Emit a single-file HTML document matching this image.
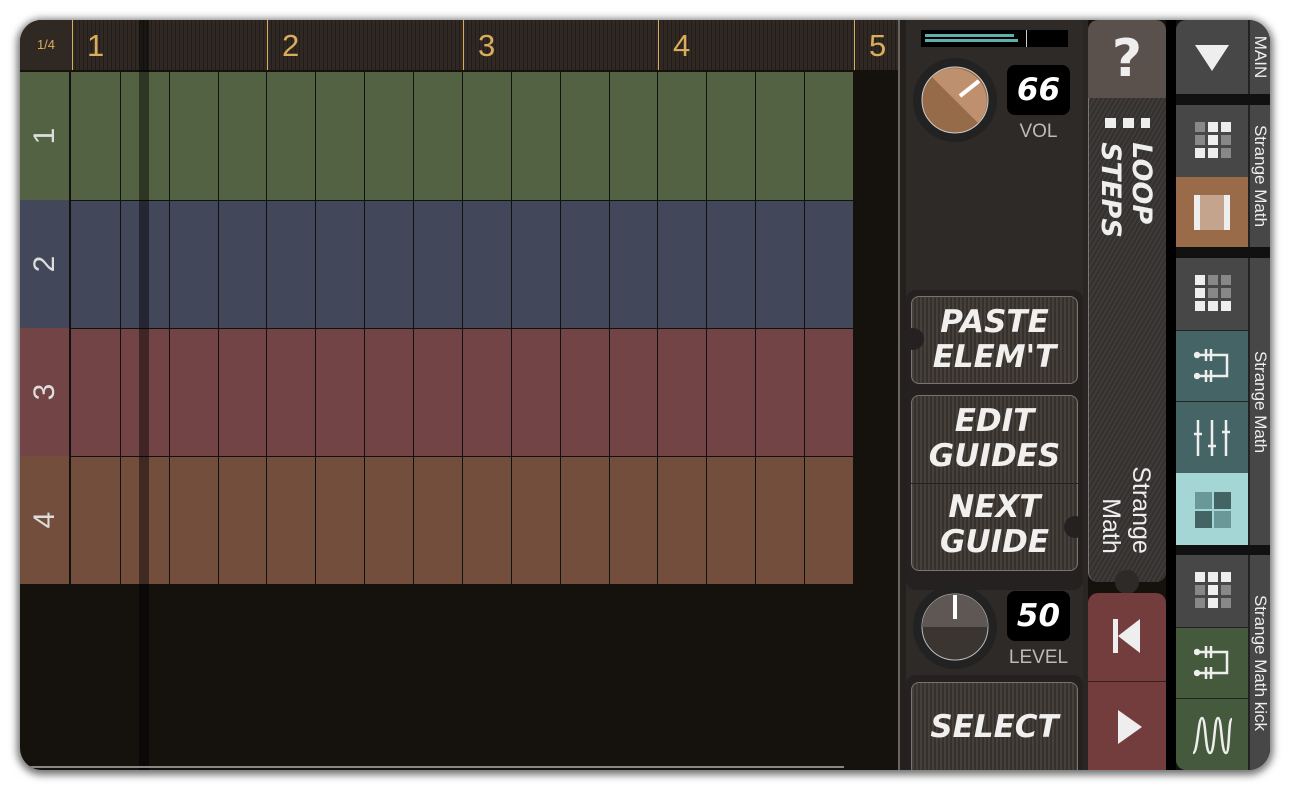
<!DOCTYPE html>
<html><head><meta charset="utf-8"><style>
*{margin:0;padding:0;box-sizing:border-box}
body{width:1290px;height:790px;background:#fff;position:relative;overflow:hidden;font-family:"Liberation Sans","DejaVu Sans",sans-serif}
.a{position:absolute}
#frame{left:20px;top:20px;width:1250px;height:750px;border-radius:22px;overflow:hidden;background:#15110d;box-shadow:0 2px 8px 3px rgba(0,0,0,.55)}
.hdr{background:#2f2823 repeating-linear-gradient(90deg,#2f2823 0 3px,#231d19 3px 4px)}
.bn{color:#d9ad5c;font-size:31px;top:8px}
.gl{width:1px;background:#d9ad5c;top:0;height:50px}
.row{left:0;width:833px;height:128px}
.lbl{left:0;width:51px;height:128px;border-right:2px solid #111}
.lbl span{position:absolute;left:50%;top:50%;transform:translate(-50%,-50%) rotate(-90deg);color:#ddd;font-size:30px}
.vl{width:1px;background:#111;top:52px;height:512px}
.btn{background:#3f3935 repeating-linear-gradient(90deg,#46403b 0 2px,#37312d 2px 4px);border:1px solid #7b746e;border-radius:8px;color:#f2f0ee;font-weight:bold;font-style:italic;font-size:31px;text-align:center;line-height:35px;font-family:"DejaVu Sans","Liberation Sans",sans-serif}
.disp{background:#000;border-radius:8px;color:#fff;font-weight:bold;font-style:italic;font-size:31px;text-align:center;font-family:"DejaVu Sans",sans-serif}
.cap{color:#bbb;font-size:19px;text-align:center}
.tile{left:1156px;width:72px}
.vt{position:absolute;left:50%;top:50%;transform:translate(-50%,-50%) rotate(90deg);white-space:nowrap;color:#eee;font-size:17px}
.gd{display:grid;grid-template-columns:repeat(3,10px);gap:3px;position:absolute;left:19px;top:17px}
.gd i{width:10px;height:10px;background:#eee}
.gd i.d{background:#888}
</style></head><body>
<div id="frame" class="a">
 <div class="a hdr" style="left:0;top:0;width:878px;height:50px"></div>
 <div class="a" style="left:0;top:0;width:52px;height:50px;background:#302823;color:#d9ad5c;font-size:13px;line-height:50px;text-align:center">1/4</div>
 <div class="a gl" style="left:52px"></div><div class="a bn" style="left:67px">1</div>
 <div class="a gl" style="left:247px"></div><div class="a bn" style="left:262px">2</div>
 <div class="a gl" style="left:443px"></div><div class="a bn" style="left:458px">3</div>
 <div class="a gl" style="left:638px"></div><div class="a bn" style="left:653px">4</div>
 <div class="a gl" style="left:834px"></div><div class="a bn" style="left:849px">5</div>
 <div class="a" style="left:878px;top:0;width:2px;height:750px;background:#6a6460"></div>
 <div class="a" style="left:0;top:50px;width:878px;height:2px;background:#15110d"></div>
 <div class="a row" style="top:52px;background:#546244"></div>
 <div class="a row" style="top:180px;background:#424859;border-top:1px solid #111"></div>
 <div class="a row" style="top:308px;background:#734446;border-top:1px solid #111"></div>
 <div class="a row" style="top:436px;background:#744e3c;border-top:1px solid #111"></div>
 <div class="a lbl" style="top:52px;background:#546244"><span>1</span></div>
 <div class="a lbl" style="top:180px;background:#424859"><span>2</span></div>
 <div class="a lbl" style="top:308px;background:#734446"><span>3</span></div>
 <div class="a lbl" style="top:436px;background:#744e3c"><span>4</span></div>
 <div class="a vl" style="left:100px"></div><div class="a vl" style="left:149px"></div><div class="a vl" style="left:198px"></div><div class="a vl" style="left:246px"></div><div class="a vl" style="left:295px"></div><div class="a vl" style="left:344px"></div><div class="a vl" style="left:393px"></div><div class="a vl" style="left:442px"></div><div class="a vl" style="left:491px"></div><div class="a vl" style="left:540px"></div><div class="a vl" style="left:589px"></div><div class="a vl" style="left:637px"></div><div class="a vl" style="left:686px"></div><div class="a vl" style="left:735px"></div><div class="a vl" style="left:784px"></div>
 <div class="a" style="left:119px;top:0;width:10px;height:750px;background:rgba(0,0,0,.45)"></div>
 <div class="a" style="left:10px;top:746px;width:814px;height:2px;background:#8a8680"></div>
 <div class="a" style="left:880px;top:0;width:183px;height:750px;background:#2e2a27"></div>
 <div class="a" style="left:880px;top:0;width:6px;height:750px;background:#24201d"></div>
 <div class="a" style="left:901px;top:10px;width:147px;height:17px;background:#000"></div>
 <div class="a" style="left:905px;top:14px;width:89px;height:3px;background:#5fb0ad"></div>
 <div class="a" style="left:905px;top:19px;width:93px;height:3px;background:#5fb0ad"></div>
 <div class="a" style="left:1006px;top:10px;width:1px;height:17px;background:#ccc"></div>
 <svg class="a" style="left:893px;top:38px" width="84" height="84"><circle cx="42" cy="42" r="42" fill="#222"/><circle cx="42" cy="42" r="33" fill="#966b4a" stroke="#ccc" stroke-width="1"/><path d="M18.7 18.7 A33 33 0 0 1 65.3 65.3 Z" fill="#bf906e"/><line x1="47" y1="38" x2="66" y2="23" stroke="#fff" stroke-width="4"/></svg>
 <div class="a disp" style="left:987px;top:45px;width:63px;height:50px;line-height:50px">66</div>
 <div class="a cap" style="left:987px;top:101px;width:63px">VOL</div>
 <div class="a" style="left:886px;top:270px;width:177px;height:300px;background:#242120;border-radius:10px"></div>
 <div class="a btn" style="left:891px;top:276px;width:167px;height:88px;padding-top:8px">PASTE<br>ELEM'T</div>
 <div class="a" style="left:882px;top:308px;width:22px;height:22px;border-radius:50%;background:#242120"></div>
 <div class="a btn" style="left:891px;top:375px;width:167px;height:176px;padding-top:8px">EDIT<br>GUIDES<div style="margin-top:16px">NEXT<br>GUIDE</div></div>
 <div class="a" style="left:891px;top:463px;width:167px;height:1px;background:#222"></div>
 <div class="a" style="left:1044px;top:496px;width:22px;height:22px;border-radius:50%;background:#242120"></div>
 <svg class="a" style="left:893px;top:565px" width="84" height="84"><circle cx="42" cy="42" r="42" fill="#222"/><circle cx="42" cy="42" r="33" fill="#3a3531" stroke="#bbb" stroke-width="1"/><path d="M9 42 A33 33 0 0 1 75 42 Z" fill="#5e5753"/><line x1="42" y1="10" x2="42" y2="34" stroke="#fff" stroke-width="4"/></svg>
 <div class="a disp" style="left:987px;top:571px;width:63px;height:50px;line-height:50px">50</div>
 <div class="a cap" style="left:982px;top:627px;width:73px">LEVEL</div>
 <div class="a" style="left:886px;top:655px;width:177px;height:100px;background:#242120;border-radius:10px"></div>
 <div class="a btn" style="left:891px;top:662px;width:167px;height:100px;line-height:88px">SELECT</div>
 <div class="a" style="left:1063px;top:0;width:5px;height:750px;background:#2a2624"></div>
 <div class="a" style="left:1068px;top:0;width:78px;height:78px;background:#5a504c;border-radius:10px 10px 0 0;color:#eee;font-size:52px;font-weight:bold;text-align:center;line-height:78px;font-family:'DejaVu Sans',sans-serif">?</div>
 <div class="a" style="left:1068px;top:78px;width:78px;height:484px;background:#3a3634 repeating-linear-gradient(120deg,#3f3b39 0 2px,#343030 2px 4px);border-left:1px solid #777;border-radius:0 0 10px 10px"></div>
 <div class="a" style="left:1085px;top:98px;width:11px;height:10px;background:#eee"></div><div class="a" style="left:1103px;top:98px;width:11px;height:10px;background:#eee"></div><div class="a" style="left:1121px;top:98px;width:9px;height:10px;background:#eee"></div>
 <div class="a" style="left:1056px;top:120px;width:100px;height:100px;"><div style="position:absolute;left:50%;top:50%;transform:translate(-50%,-50%) rotate(90deg);white-space:nowrap;color:#eee;font-weight:bold;font-style:italic;font-size:27px;line-height:31px;font-family:'DejaVu Sans',sans-serif">LOOP<br>STEPS</div></div>
 <div class="a" style="left:1056px;top:440px;width:100px;height:100px"><div style="position:absolute;left:50%;top:50%;transform:translate(-50%,-50%) rotate(90deg);white-space:nowrap;color:#eee;font-size:25px;line-height:30px;text-align:right">Strange<br>Math</div></div>
 <div class="a" style="left:1095px;top:550px;width:24px;height:24px;border-radius:50%;background:#2e2a27"></div>
 <div class="a" style="left:1068px;top:573px;width:78px;height:177px;background:#743d3d;border-radius:10px 10px 0 0"></div>
 <div class="a" style="left:1068px;top:661px;width:78px;height:1px;background:#3a2020"></div>
 <svg class="a" style="left:1090px;top:597px" width="36" height="40"><rect x="3" y="2" width="5" height="34" fill="#eee"/><path d="M8 19 L30 2 L30 36 Z" fill="#eee"/></svg>
 <svg class="a" style="left:1090px;top:687px" width="36" height="40"><path d="M8 3 L32 20 L8 37 Z" fill="#eee"/></svg>
 <div class="a" style="left:1146px;top:0;width:10px;height:750px;background:#000"></div>
 <div class="a" style="left:1156px;top:0;width:94px;height:750px;background:#111"></div>
 <div class="a tile" style="top:0;height:74px;background:#474747;border-radius:10px 0 0 0"><svg style="position:absolute;left:19px;top:25px" width="34" height="26"><path d="M0 0 H34 L17 26 Z" fill="#eee"/></svg></div>
 <div class="a tile" style="top:85px;height:72px;background:#474747"><div class="gd"><i class="d"></i><i></i><i></i><i class="d"></i><i></i><i class="d"></i><i></i><i></i><i class="d"></i></div></div>
 <div class="a tile" style="top:157px;height:70px;background:#9a6b48"><div class="a" style="left:18px;top:18px;width:36px;height:35px;background:#c4a48c"></div><div class="a" style="left:18px;top:18px;width:6px;height:35px;background:#eee"></div><div class="a" style="left:48px;top:18px;width:6px;height:35px;background:#eee"></div></div>
 <div class="a tile" style="top:238px;height:72px;background:#474747"><div class="gd"><i></i><i class="d"></i><i class="d"></i><i></i><i class="d"></i><i class="d"></i><i></i><i></i><i></i></div></div>
 <div class="a tile" style="top:310px;height:71px;background:#456465;border-top:1px solid #222"><svg style="position:absolute;left:18px;top:17px" width="36" height="38" fill="none" stroke="#eee" stroke-width="2.5"><path d="M3 7 H17 M12 1 V13 M17 1 V13 M17 7 H33 V28 H17 M3 28 H17 M12 22 V34 M17 22 V34"/><circle cx="3" cy="7" r="2" fill="#eee"/><circle cx="3" cy="28" r="2" fill="#eee"/></svg></div>
 <div class="a tile" style="top:381px;height:72px;background:#456465;border-top:1px solid #222"><svg style="position:absolute;left:18px;top:18px" width="36" height="36" stroke="#eee" stroke-width="2.5"><path d="M4 0V36M18 0V36M32 0V36M0 14H8M14 26H22M28 12H36"/></svg></div>
 <div class="a tile" style="top:453px;height:72px;background:#a5d6d6"><div class="a" style="left:19px;top:19px;width:17px;height:17px;background:#6a9898"></div><div class="a" style="left:38px;top:19px;width:17px;height:17px;background:#446464"></div><div class="a" style="left:19px;top:38px;width:17px;height:17px;background:#446464"></div><div class="a" style="left:38px;top:38px;width:17px;height:17px;background:#6a9898"></div></div>
 <div class="a tile" style="top:535px;height:72px;background:#474747"><div class="gd"><i></i><i></i><i></i><i class="d"></i><i></i><i class="d"></i><i class="d"></i><i></i><i class="d"></i></div></div>
 <div class="a tile" style="top:607px;height:71px;background:#455a3c;border-top:1px solid #222"><svg style="position:absolute;left:18px;top:17px" width="36" height="38" fill="none" stroke="#eee" stroke-width="2.5"><path d="M3 7 H17 M12 1 V13 M17 1 V13 M17 7 H33 V28 H17 M3 28 H17 M12 22 V34 M17 22 V34"/><circle cx="3" cy="7" r="2" fill="#eee"/><circle cx="3" cy="28" r="2" fill="#eee"/></svg></div>
 <div class="a tile" style="top:678px;height:72px;background:#455a3c;border-top:1px solid #222;border-radius:0 0 0 10px"><svg style="position:absolute;left:14px;top:16px" width="44" height="44" fill="none" stroke="#eee" stroke-width="2.5"><path d="M3 38 C8 38 8 3 12 3 C16 3 15 38 20 38 C25 38 24 3 28 3 C32 3 31 38 36 38 C40 38 38 4 42 4"/></svg></div>
 <div class="a" style="left:1228px;top:0;width:22px;height:750px;background:#474747;border-left:2px solid #222"></div>
 <div class="a" style="left:1228px;top:74px;width:22px;height:11px;background:#111"></div>
 <div class="a" style="left:1228px;top:227px;width:22px;height:11px;background:#111"></div>
 <div class="a" style="left:1228px;top:525px;width:22px;height:10px;background:#111"></div>
 <div class="a" style="left:1229px;top:0;width:21px;height:74px"><div class="vt">MAIN</div></div>
 <div class="a" style="left:1229px;top:85px;width:21px;height:142px"><div class="vt">Strange Math</div></div>
 <div class="a" style="left:1229px;top:238px;width:21px;height:287px"><div class="vt">Strange Math</div></div>
 <div class="a" style="left:1229px;top:535px;width:21px;height:215px"><div class="vt">Strange Math kick</div></div>
</div>
</body></html>
